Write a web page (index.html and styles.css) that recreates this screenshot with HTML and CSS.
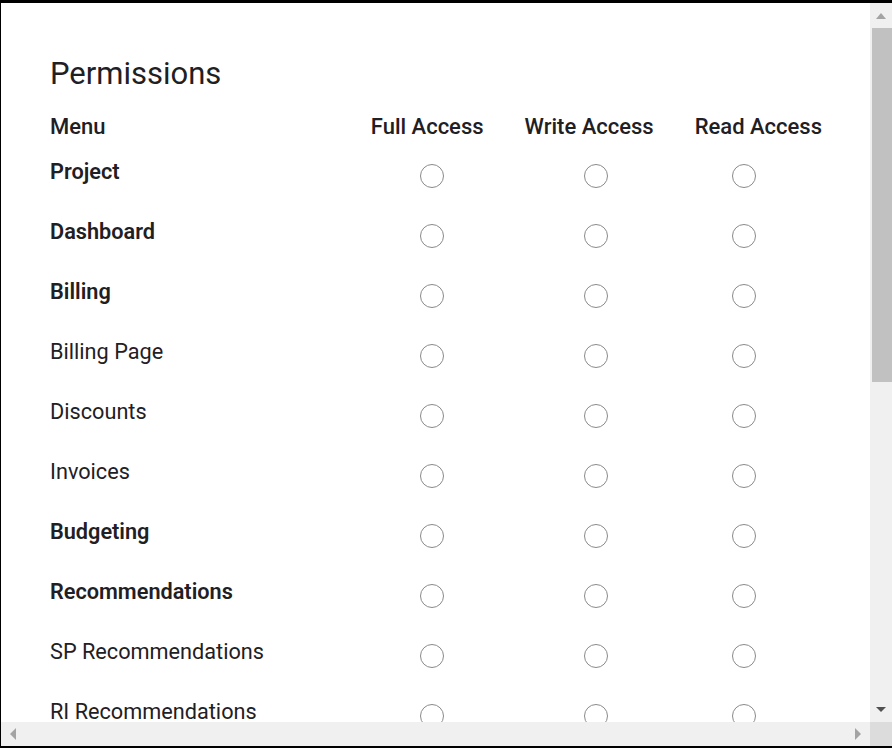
FILE: index.html
```html
<!DOCTYPE html>
<html lang="en">
<head>
<meta charset="utf-8">
<title>Permissions</title>
<link rel="stylesheet" href="styles.css">
</head>
<body>
<div class="frame">
  <div class="viewport">
    <div class="content">
      <h1 class="title">Permissions</h1>
      <div class="head-row">
        <div class="head-menu">Menu</div>
        <div class="head-cols">
          <span>Full Access</span>
          <span>Write Access</span>
          <span>Read Access</span>
        </div>
      </div>
      <div class="rows">
        <div class="label strong">Project</div><input class="radio" type="radio" name="r1"><input class="radio" type="radio" name="r1"><input class="radio" type="radio" name="r1">
        <div class="label strong">Dashboard</div><input class="radio" type="radio" name="r2"><input class="radio" type="radio" name="r2"><input class="radio" type="radio" name="r2">
        <div class="label strong">Billing</div><input class="radio" type="radio" name="r3"><input class="radio" type="radio" name="r3"><input class="radio" type="radio" name="r3">
        <div class="label">Billing Page</div><input class="radio" type="radio" name="r4"><input class="radio" type="radio" name="r4"><input class="radio" type="radio" name="r4">
        <div class="label">Discounts</div><input class="radio" type="radio" name="r5"><input class="radio" type="radio" name="r5"><input class="radio" type="radio" name="r5">
        <div class="label">Invoices</div><input class="radio" type="radio" name="r6"><input class="radio" type="radio" name="r6"><input class="radio" type="radio" name="r6">
        <div class="label strong">Budgeting</div><input class="radio" type="radio" name="r7"><input class="radio" type="radio" name="r7"><input class="radio" type="radio" name="r7">
        <div class="label strong">Recommendations</div><input class="radio" type="radio" name="r8"><input class="radio" type="radio" name="r8"><input class="radio" type="radio" name="r8">
        <div class="label">SP Recommendations</div><input class="radio" type="radio" name="r9"><input class="radio" type="radio" name="r9"><input class="radio" type="radio" name="r9">
        <div class="label">RI Recommendations</div><input class="radio" type="radio" name="r10"><input class="radio" type="radio" name="r10"><input class="radio" type="radio" name="r10">
      </div>
    </div>
  </div>
  <div class="vbar">
    <div class="arrow-up"></div>
    <div class="vthumb"></div>
    <div class="vspace"></div>
    <div class="arrow-down"></div>
  </div>
  <div class="hbar">
    <div class="arrow-left"></div>
    <div class="arrow-right"></div>
  </div>
  <div class="corner"></div>
</div>
</body>
</html>
```
FILE: styles.css
```css
* { box-sizing: border-box; }
html, body { margin: 0; padding: 0; background: #fff; }
body { width: 892px; height: 748px; overflow: hidden; }

.frame {
  width: 892px;
  height: 748px;
  border-top: 3px solid #000;
  border-left: 1px solid #000;
  border-bottom: 2px solid #000;
  display: grid;
  grid-template-columns: 1fr 22px;
  grid-template-rows: 1fr 24px;
  font-family: "Roboto", "Liberation Sans", sans-serif;
  color: #1f2023;
}

.viewport { overflow: hidden; background: #fff; }
.content { padding: 51px 48px 0 49px; }

.title {
  margin: 0;
  font-size: 31px;
  font-weight: 400;
  line-height: 40px;
  letter-spacing: 0;
}

.head-row {
  display: flex;
  align-items: flex-start;
  margin-top: 21px;
  font-size: 22px;
  font-weight: 500;
  line-height: 24px;
}
.head-menu { flex: 1; }
.head-cols { display: flex; gap: 41px; }

.rows {
  display: grid;
  grid-template-columns: 370px 164px 148px 24px;
  grid-auto-rows: 60px;
  margin-top: 20px;
}
.label {
  font-size: 21.7px;
  line-height: 24px;
  font-weight: 400;
  padding-top: 1px;
}
.label.strong { font-weight: 600; }

.radio {
  appearance: none;
  -webkit-appearance: none;
  width: 24px;
  height: 24px;
  margin: 5px 0 0 0;
  border: 1px solid #8a8a8a;
  border-radius: 50%;
  background: #fff;
}

.vbar {
  background: #f0f0f0;
  display: flex;
  flex-direction: column;
  align-items: center;
}
.arrow-up {
  margin-top: 10px;
  width: 0; height: 0;
  border-left: 5px solid transparent;
  border-right: 5px solid transparent;
  border-bottom: 6px solid #a3a3a3;
}
.vthumb {
  margin-top: 9px;
  align-self: flex-end;
  width: 20px;
  height: 354px;
  background: #c1c1c1;
}
.vspace { flex: 1; }
.arrow-down {
  margin-bottom: 10px;
  width: 0; height: 0;
  border-left: 5px solid transparent;
  border-right: 5px solid transparent;
  border-top: 5px solid #505050;
}

.hbar {
  background: #f0f0f0;
  display: flex;
  align-items: center;
  justify-content: space-between;
  padding: 0 9px 0 9px;
}
.arrow-left {
  width: 0; height: 0;
  border-top: 6px solid transparent;
  border-bottom: 6px solid transparent;
  border-right: 6px solid #a3a3a3;
}
.arrow-right {
  width: 0; height: 0;
  border-top: 6px solid transparent;
  border-bottom: 6px solid transparent;
  border-left: 6px solid #a3a3a3;
}
.corner { background: #dcdcdc; }
```
